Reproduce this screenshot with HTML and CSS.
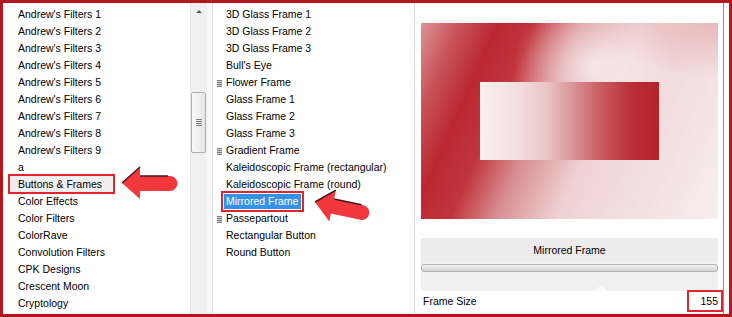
FILE: index.html
```html
<!DOCTYPE html>
<html lang="en">
<head>
    <meta charset="UTF-8">
    <title>Plugin Filters</title>
    <link rel="stylesheet" href="styles.css">
</head>
<body>
    <div class="window">
        <!-- Filter categories -->
        <div class="list list-cats">
            <div class="item">Andrew's Filters 1</div>
            <div class="item">Andrew's Filters 2</div>
            <div class="item">Andrew's Filters 3</div>
            <div class="item">Andrew's Filters 4</div>
            <div class="item">Andrew's Filters 5</div>
            <div class="item">Andrew's Filters 6</div>
            <div class="item">Andrew's Filters 7</div>
            <div class="item">Andrew's Filters 8</div>
            <div class="item">Andrew's Filters 9</div>
            <div class="item">a</div>
            <div class="item"><span class="picked">Buttons &amp; Frames</span></div>
            <div class="item">Color Effects</div>
            <div class="item">Color Filters</div>
            <div class="item">ColorRave</div>
            <div class="item">Convolution Filters</div>
            <div class="item">CPK Designs</div>
            <div class="item">Crescent Moon</div>
            <div class="item">Cryptology</div>
        </div>

        <div class="scrollbar">
            <div class="scroll-up"></div>
            <div class="thumb"><span class="grip"></span></div>
        </div>
        <div class="splitter"></div>

        <!-- Effects in the category -->
        <div class="list list-effects">
            <div class="item">3D Glass Frame 1</div>
            <div class="item">3D Glass Frame 2</div>
            <div class="item">3D Glass Frame 3</div>
            <div class="item">Bull's Eye</div>
            <div class="item has-sub">Flower Frame</div>
            <div class="item">Glass Frame 1</div>
            <div class="item">Glass Frame 2</div>
            <div class="item">Glass Frame 3</div>
            <div class="item has-sub">Gradient Frame</div>
            <div class="item">Kaleidoscopic Frame (rectangular)</div>
            <div class="item">Kaleidoscopic Frame (round)</div>
            <div class="item"><span class="current">Mirrored Frame</span></div>
            <div class="item has-sub">Passepartout</div>
            <div class="item">Rectangular Button</div>
            <div class="item">Round Button</div>
        </div>

        <!-- Preview and settings -->
        <div class="panel">
            <div class="preview"><div class="preview-inner"></div></div>
            <div class="controls">
                <div class="effect-title">Mirrored Frame</div>
                <div class="slider"></div>
                <div class="pointer-area"><span class="pointer"></span></div>
            </div>
            <div class="param-row">
                <span class="param-name">Frame Size</span>
                <span class="param-value">155</span>
            </div>
        </div>

        <!-- Red callout arrows -->
        <svg class="callout callout-cats" width="58" height="34" viewBox="0 0 58 34">
            <path d="M1 17 L19 1 L19 10 L49 10 A7.5 7.5 0 0 1 49 25 L19 25 L19 33 Z" fill="#f2383d"/>
            <path d="M1 17 L19 1 M19 10 L47 10" stroke="#4a1414" stroke-width="1.5" fill="none"/>
        </svg>
        <svg class="callout callout-effects" width="58" height="34" viewBox="0 0 58 34">
            <path d="M1 17 L19 1 L19 10 L49 10 A7.5 7.5 0 0 1 49 25 L19 25 L19 33 Z" fill="#f2383d"/>
            <path d="M1 17 L19 1 M19 10 L47 10" stroke="#4a1414" stroke-width="1.5" fill="none"/>
        </svg>
    </div>
</body>
</html>
```

FILE: styles.css
```css
body {
    margin: 0;
    font-family: 'Liberation Sans', Arial, sans-serif;
    font-size: 10.5px;
    color: #000;
    background-color: #fff;
}

.window {
    position: relative;
    display: flex;
    width: 732px;
    height: 317px;
    box-sizing: border-box;
    border: 3px solid #b3171d;
    background-color: #fff;
    overflow: hidden;
}

.list {
    box-sizing: border-box;
    padding-top: 3px;
    overflow: hidden;
    white-space: nowrap;
}

.list .item {
    height: 17px;
    line-height: 17px;
}

.list-cats {
    width: 187px;
    padding-left: 15px;
}

.list-effects {
    width: 201px;
    padding-left: 13px;
}

/* category picked earlier - grey selection */
.picked {
    display: inline-block;
    margin-left: -8px;
    padding: 0 11px 0 8px;
    line-height: 16px;
    background-color: #efefef;
    outline: 2px solid #e0262c;
}

/* active effect - blue selection */
.current {
    display: inline-block;
    margin-left: -2px;
    padding: 0 3px 0 2px;
    line-height: 15px;
    color: #fff;
    background-color: #3592ec;
    outline: 2px solid #e0262c;
    outline-offset: 1px;
}

.has-sub::before {
    content: '';
    display: inline-block;
    width: 5px;
    height: 7px;
    margin-left: -9px;
    margin-right: 4px;
    vertical-align: -1px;
    background: repeating-linear-gradient(#7d7d7d 0 1px, #cfcfcf 1px 2px);
}

.scrollbar {
    width: 17px;
    box-sizing: border-box;
    background-color: #f0f0f0;
    border-left: 1px solid #e6e6e6;
}

.scroll-up {
    height: 17px;
    display: flex;
    align-items: center;
    justify-content: center;
}

.scroll-up::before {
    content: '';
    border-left: 3px solid transparent;
    border-right: 3px solid transparent;
    border-bottom: 3px solid #5a5a5a;
}

.thumb {
    height: 61px;
    margin: 72px 1px 0 0;
    box-sizing: border-box;
    border: 1px solid #b0b0b0;
    border-radius: 2px;
    background: linear-gradient(to right, #fafafa, #e6e6e6);
    display: flex;
    align-items: center;
    justify-content: center;
}

.grip {
    width: 6px;
    height: 7px;
    background: repeating-linear-gradient(#7a7a7a 0 1px, transparent 1px 2px);
}

.splitter {
    width: 6px;
    box-sizing: border-box;
    background-color: #f7f7f7;
    border-right: 1px solid #dedede;
}

.panel {
    width: 310px;
    margin-right: 5px;
    box-sizing: border-box;
    padding: 20px 5px 0 6px;
    border-left: 1px solid #dcdcdc;
    border-right: 1px solid #8c8c8c;
    display: flex;
    flex-direction: column;
}

.preview {
    height: 196px;
    box-sizing: border-box;
    padding: 59px 0 0 59px;
    background:
        radial-gradient(ellipse 80px 70px at 58% 22%, rgba(255, 255, 255, 0.7), rgba(255, 255, 255, 0)),
        radial-gradient(ellipse 120px 55px at 100% 0%, rgba(226, 160, 163, 0.6), rgba(226, 160, 163, 0)),
        linear-gradient(114deg, #dc9498 0%, #c8545a 10%, #bb2830 20%, #c0353c 30%, #d88e91 42%, #efd2d3 58%, #f3e1e1 80%, #f8efef 100%);
}

.preview-inner {
    width: 179px;
    height: 78px;
    background: linear-gradient(to right, #fbf1f1 0%, #f3dede 22%, #eac3c4 38%, #dc9a9d 50%, #ca6166 66%, #bb2f36 84%, #b6222a 100%);
}

.controls {
    margin-top: 19px;
    background-color: #f0f0f0;
}

.effect-title {
    height: 24px;
    line-height: 24px;
    text-align: center;
    background-color: #ececec;
}

.slider {
    height: 8px;
    margin-top: 2px;
    box-sizing: border-box;
    border: 1px solid #b4b4b4;
    border-radius: 3px;
    background: linear-gradient(#f2f2f2, #d4d4d4);
}

.pointer-area {
    height: 19px;
    display: flex;
    align-items: flex-end;
    padding-left: 173px;
}

.pointer {
    border-left: 7px solid transparent;
    border-right: 7px solid transparent;
    border-bottom: 6px solid #fafafa;
}

.param-row {
    height: 20px;
    display: flex;
    align-items: center;
    justify-content: space-between;
    padding-left: 2px;
    margin-right: -5px;
    background-color: #fff;
}

.param-value {
    width: 32px;
    height: 18px;
    line-height: 18px;
    margin-right: 2px;
    padding-right: 3px;
    box-sizing: border-box;
    text-align: right;
    outline: 2px solid #e0262c;
}

.callout {
    position: absolute;
    transform-origin: 1px 17px;
}

.callout-cats {
    left: 118px;
    top: 163px;
}

.callout-effects {
    left: 311px;
    top: 182px;
    transform: rotate(12deg);
}
```
